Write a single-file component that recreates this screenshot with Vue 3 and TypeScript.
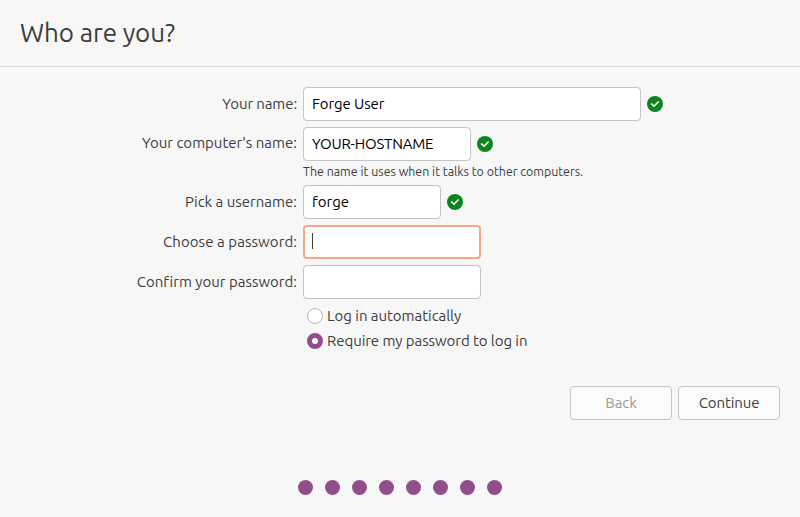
<script setup lang="ts">
interface Row {
  label: string
  value: string
  kind: string
  valid: boolean
  hint?: string
}

const rows: Row[] = [
  { label: 'Your name:', value: 'Forge User', kind: 'name', valid: true },
  { label: "Your computer's name:", value: 'YOUR-HOSTNAME', kind: 'hostname', valid: true, hint: 'The name it uses when it talks to other computers.' },
  { label: 'Pick a username:', value: 'forge', kind: 'user', valid: true },
  { label: 'Choose a password:', value: '', kind: 'choose', valid: false },
  { label: 'Confirm your password:', value: '', kind: 'confirm', valid: false },
]
const steps = 8
</script>

<template>
  <main class="page">
    <header><h1>Who are you?</h1></header>
    <form class="form" @submit.prevent>
      <div v-for="row in rows" :key="row.kind" class="group" :class="row.kind">
        <div class="row">
          <label>{{ row.label }}</label>
          <div class="field"><span v-if="row.value">{{ row.value }}</span><i v-if="row.kind === 'choose'" class="caret" /></div>
          <svg v-if="row.valid" class="check" viewBox="0 0 16 16"><circle cx="8" cy="8" r="8" /><path d="M4.2 7.5 7 10.2 11.6 5.5" /></svg>
        </div>
        <p v-if="row.hint" class="hint">{{ row.hint }}</p>
      </div>
      <div class="radios">
        <div class="radio auto"><i class="dot" /><span>Log in automatically</span></div>
        <div class="radio require"><i class="dot on" /><span>Require my password to log in</span></div>
      </div>
    </form>
    <div class="actions"><button type="button" disabled>Back</button><button type="button">Continue</button></div>
    <div class="steps"><i v-for="s in steps" :key="s" /></div>
  </main>
</template>

<style>
body { margin: 0; background: #f7f7f7; }
</style>
<style scoped>
* { box-sizing: border-box; }
.page { width: 800px; height: 517px; background: #f7f7f7; color: #3d3d3d; font: 15px/20px "Ubuntu", "Noto Sans", sans-serif; font-variant-ligatures: none; overflow: hidden; }
header { height: 67px; padding: 16px 20px; border-bottom: 1px solid #dcdcdc; }
h1 { margin: 0; font-size: 26px; line-height: 34px; font-weight: 400; letter-spacing: -0.1px; }
.form { padding-top: 20px; height: 319px; }
.group { margin-bottom: 6px; }
.row { display: flex; align-items: center; height: 34px; }
label { width: 297px; text-align: right; margin-right: 6px; white-space: nowrap; }
.field { width: 178px; height: 34px; border: 1px solid #c4c4c4; border-radius: 4px; background: #fff; color: #000; padding: 6px 8px; white-space: nowrap; }
.name .field { width: 338px; letter-spacing: -0.1px; }
.name label { letter-spacing: -0.1px; }
.hostname { margin-bottom: 0; }
.hostname label { padding-bottom: 2px; }
.hostname .field { width: 168px; letter-spacing: -0.2px; }
.user .field { width: 138px; }
.choose .field { border: 2px solid #f4a58c; padding: 5px 7px; }
.choose label { letter-spacing: 0.07px; }
.caret { display: block; width: 1px; height: 16px; margin-top: 1px; background: #3d3d3d; }
.check { width: 16px; height: 16px; margin-left: 6px; fill: #0e8420; }
.check path { fill: none; stroke: #fff; stroke-width: 1.6; }
.hint { margin: 0 0 0 303px; height: 24px; line-height: 21px; font-size: 12.4px; }
.radios { margin-top: -2px; }
.radio { display: flex; align-items: center; gap: 4px; height: 25px; margin-left: 307px; }
.auto { letter-spacing: -0.04px; }
.require { letter-spacing: -0.07px; }
.dot { width: 16px; height: 16px; border-radius: 50%; border: 1px solid #b8b8b8; background: #fff; }
.on { border: 5.5px solid #924d8b; }
.actions { display: flex; justify-content: flex-end; gap: 6px; padding-right: 20px; }
button { width: 102px; height: 34px; border: 1px solid #c4c4c4; border-radius: 4px; background: #fbfbfb; font: inherit; color: #3d3d3d; padding: 0; letter-spacing: -0.1px; }
button:disabled { color: #9c9c9c; letter-spacing: -0.1px; }
.steps { display: flex; justify-content: center; gap: 12px; margin-top: 60px; }
.steps i { width: 15px; height: 15px; border-radius: 50%; background: #924d8b; }
</style>
